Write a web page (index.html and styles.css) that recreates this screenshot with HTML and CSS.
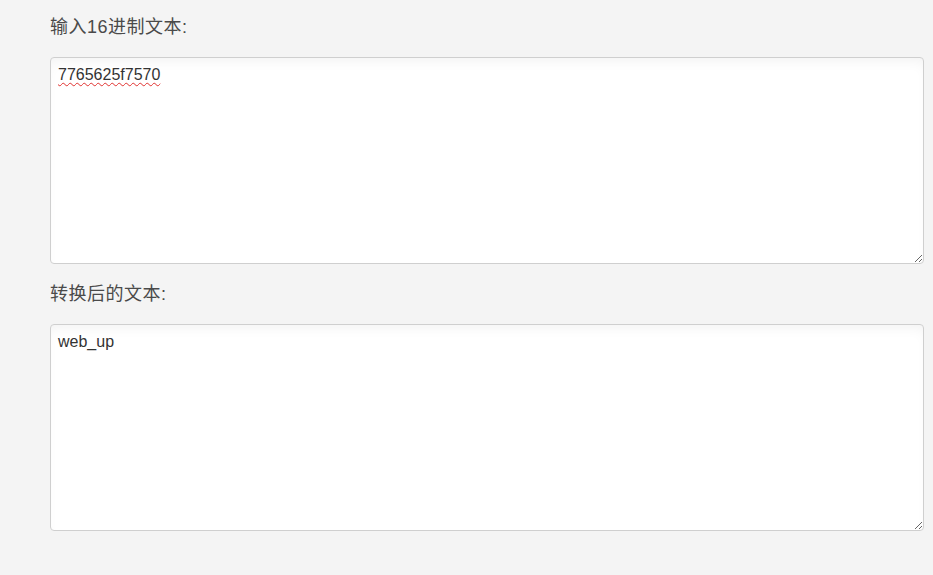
FILE: index.html
```html
<!DOCTYPE html>
<html lang="zh-CN">
<head>
<meta charset="utf-8">
<title>16进制转文本</title>
<link rel="stylesheet" href="styles.css">
</head>
<body>
<main class="page">
  <div class="field">
    <label class="field-label" for="hex">输入16进制文本:</label>
    <textarea id="hex" class="box box-misspelled" spellcheck="false">7765625f7570</textarea>
  </div>
  <div class="field">
    <label class="field-label" for="out">转换后的文本:</label>
    <textarea id="out" class="box" spellcheck="false">web_up</textarea>
  </div>
</main>
</body>
</html>
```
FILE: styles.css
```css
html, body {
  margin: 0;
  padding: 0;
  background: #f4f4f4;
}
.page {
  padding: 15px 9px 0 50px;
  display: flex;
  flex-direction: column;
  gap: 18px;
  font-family: "Liberation Sans", "Noto Sans CJK SC", sans-serif;
}
.field {
  display: flex;
  flex-direction: column;
}
.field-label {
  font-size: 18px;
  line-height: 24px;
  color: #4a4a4a;
  margin-bottom: 18px;
  letter-spacing: 0.5px;
}
.box {
  box-sizing: border-box;
  width: 100%;
  height: 207px;
  margin: 0;
  padding: 6px 7px 5px;
  border: 1px solid #cfcfcf;
  border-radius: 4px;
  background: #fff;
  box-shadow: inset 0 8px 14px -6px rgba(0, 0, 0, 0.06);
  font-family: "Liberation Sans", sans-serif;
  font-size: 16px;
  line-height: 22px;
  color: #333;
  resize: vertical;
  outline: none;
}
.box-misspelled {
  text-decoration: underline wavy #e0312f;
  text-decoration-thickness: 1px;
  text-underline-offset: 2px;
}
```
